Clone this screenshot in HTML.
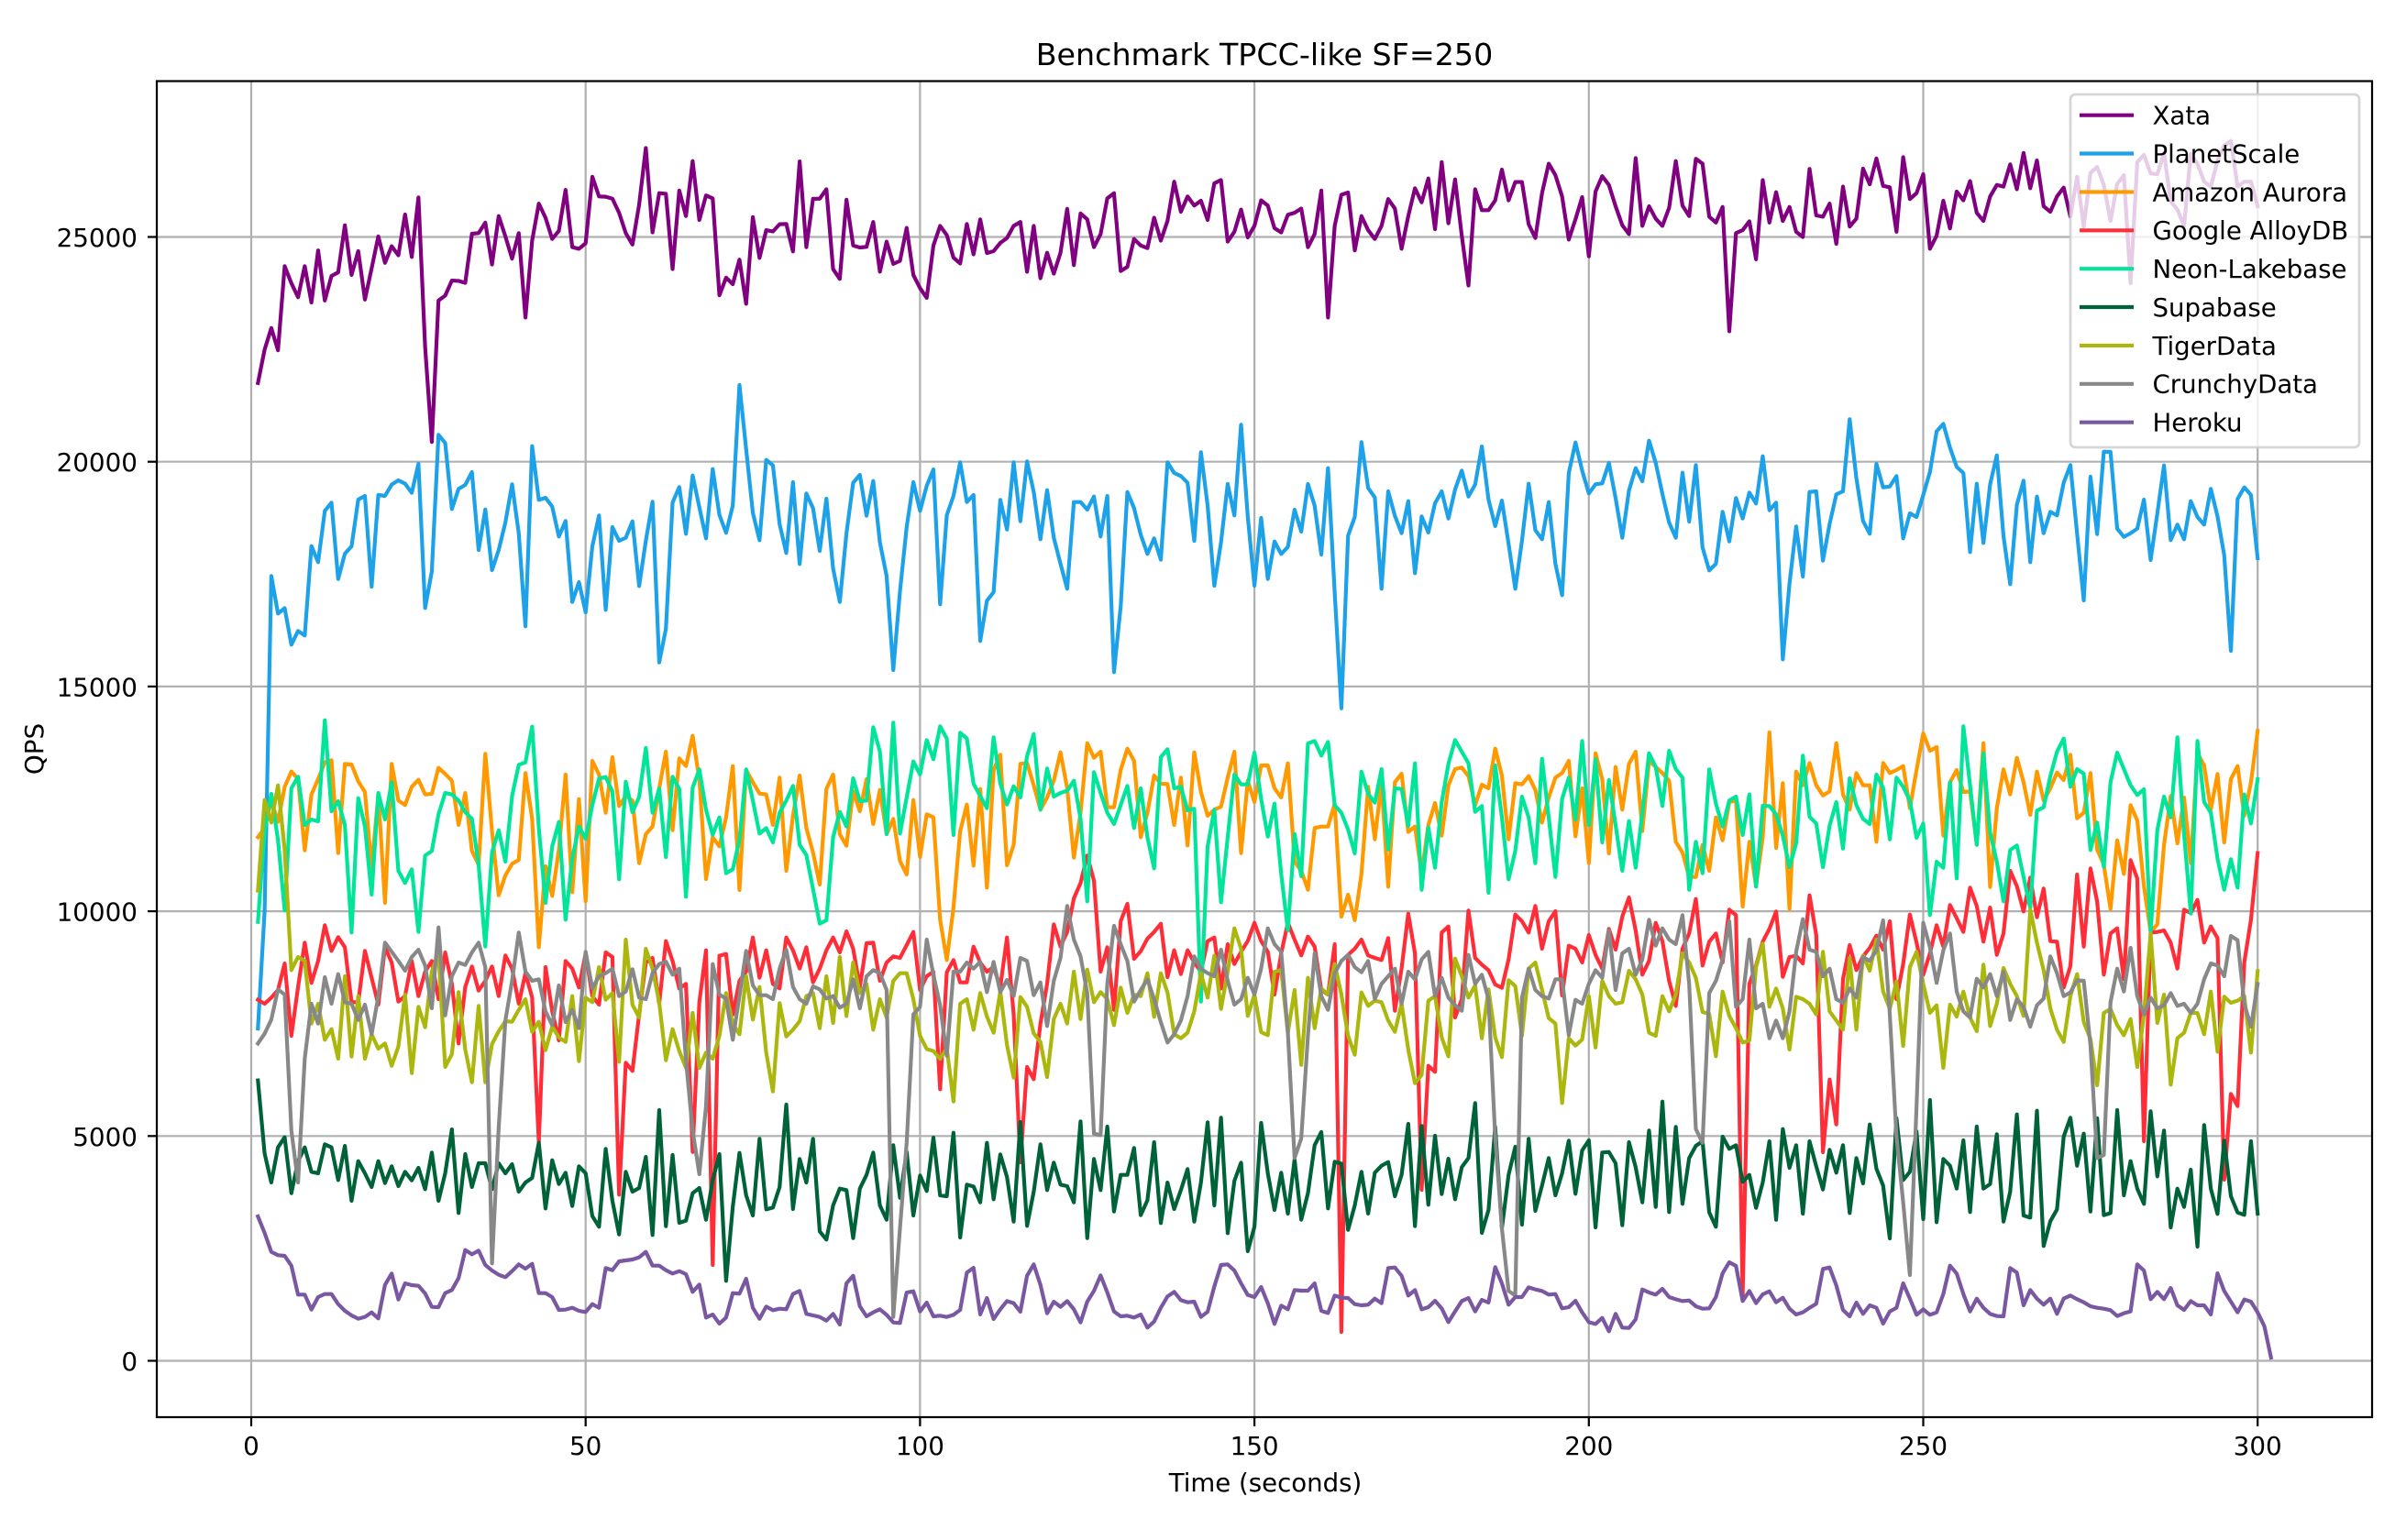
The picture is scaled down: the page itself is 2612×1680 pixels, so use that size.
<!DOCTYPE html>
<html lang="en">
<head>
<meta charset="utf-8">
<title>Benchmark TPCC-like SF=250</title>
<style>
html,body{margin:0;padding:0;background:#fff;width:2612px;height:1680px;overflow:hidden}
svg{display:block}
text{font-family:"DejaVu Sans","Liberation Sans",sans-serif;fill:#000}
.s{fill:none;stroke-width:4.17;stroke-linejoin:round;stroke-linecap:square;vector-effect:non-scaling-stroke}
.g{stroke:#b0b0b0;stroke-width:2.22}
.t{stroke:#000;stroke-width:2.22}
.xl{font-size:27.8px;text-anchor:middle}
.yl{font-size:27.8px;text-anchor:end}
.lg{font-size:27.6px}
</style>
</head>
<body>
<svg width="2612" height="1680" viewBox="0 0 2612 1680" xmlns="http://www.w3.org/2000/svg">
<rect width="2612" height="1680" fill="#fff"/>
<g class="g">
<line x1="274" y1="88.5" x2="274" y2="1546"/><line x1="638.7" y1="88.5" x2="638.7" y2="1546"/><line x1="1003.4" y1="88.5" x2="1003.4" y2="1546"/><line x1="1368.1" y1="88.5" x2="1368.1" y2="1546"/><line x1="1732.8" y1="88.5" x2="1732.8" y2="1546"/><line x1="2097.5" y1="88.5" x2="2097.5" y2="1546"/><line x1="2462.2" y1="88.5" x2="2462.2" y2="1546"/>
<line x1="171" y1="1484.5" x2="2587" y2="1484.5"/><line x1="171" y1="1239.3" x2="2587" y2="1239.3"/><line x1="171" y1="994.1" x2="2587" y2="994.1"/><line x1="171" y1="748.9" x2="2587" y2="748.9"/><line x1="171" y1="503.7" x2="2587" y2="503.7"/><line x1="171" y1="258.5" x2="2587" y2="258.5"/>
</g>
<!-- Xata -->
<polyline class="s" stroke="#800080" transform="translate(274,0) scale(7.294,0.35714)" points="1,1170 2,1068 3,1002 4,1070 5,813 6,865 7,908 8,813 9,924 10,765 11,918 12,843 13,832 14,688 15,840 16,767 17,915 18,820 19,722 20,803 21,752 22,780 23,655 24,785 25,603 26,1060 27,1350 28,918 29,903 30,857 31,858 32,864 33,714 34,712 35,680 36,808 37,660 38,722 39,790 40,712 41,970 42,735 43,622 44,665 45,730 46,705 47,580 48,755 49,760 50,743 51,540 52,600 53,601 54,607 55,650 56,712 57,747 58,625 59,452 60,710 61,590 62,592 63,822 64,582 65,660 66,492 67,672 68,597 69,606 70,902 71,848 72,868 73,793 74,928 75,663 76,788 77,703 78,707 79,685 80,684 81,768 82,493 83,755 84,607 85,607 86,578 87,822 88,852 89,610 90,750 91,756 92,754 93,678 94,830 95,738 96,806 97,797 98,696 99,840 100,880 101,910 102,750 103,690 104,718 105,787 106,805 107,684 108,777 109,670 110,773 111,767 112,742 113,727 114,690 115,678 116,830 117,690 118,850 119,772 120,836 121,772 122,638 123,810 124,652 125,670 126,755 127,715 128,606 129,590 130,828 131,815 132,730 133,750 134,758 135,665 136,735 137,675 138,555 139,647 140,600 141,628 142,613 143,672 144,560 145,550 146,738 147,708 148,640 149,725 150,690 151,612 152,628 153,697 154,710 155,656 156,650 157,637 158,755 159,715 160,582 161,970 162,690 163,595 164,588 165,765 166,660 167,703 168,730 169,690 170,608 171,637 172,760 173,660 174,575 175,618 176,545 177,700 178,495 179,682 180,548 181,720 182,872 183,578 184,642 185,642 186,612 187,518 188,612 189,556 190,556 191,685 192,727 193,590 194,500 195,535 196,600 197,732 198,670 199,602 200,783 201,585 202,538 203,565 204,630 205,688 206,715 207,483 208,690 209,630 210,668 211,690 212,635 213,492 214,628 215,660 216,485 217,500 218,662 219,680 220,632 221,1012 222,712 223,703 224,676 225,792 226,550 227,680 228,587 229,675 230,632 231,708 232,724 233,516 234,658 235,662 236,622 237,745 238,570 239,692 240,668 241,515 242,563 243,484 244,568 245,572 246,708 247,480 248,608 249,590 250,532 251,760 252,720 253,613 254,698 255,585 256,612 257,553 258,650 259,675 260,600 261,565 262,570 263,502 264,578 265,467 266,575 267,490 268,630 269,647 270,600 271,573 272,662 273,540 274,692 275,528 276,510 277,565 278,675 279,562 280,535 281,865 282,495 283,473 284,530 285,532 286,468 287,615 288,640 289,690 290,470 291,500 292,555 293,570 294,490 295,445 296,430 297,570 298,555 299,555 300,630"/>
<!-- PlanetScale -->
<polyline class="s" stroke="#1da1e8" transform="translate(274,440) scale(7.294,0.33333)" points="1,2046 2,1662 3,565 4,688 5,670 6,790 7,745 8,760 9,467 10,520 11,352 12,325 13,575 14,492 15,468 16,315 17,303 18,600 19,300 20,303 21,266 22,252 23,263 24,293 25,198 26,670 27,550 28,103 29,130 30,346 31,280 32,267 33,225 34,480 35,347 36,546 37,480 38,390 39,265 40,425 41,730 42,140 43,316 44,309 45,338 46,436 47,385 48,650 49,585 50,684 51,468 52,367 53,676 54,405 55,450 56,440 57,386 58,598 59,450 60,322 61,848 62,738 63,325 64,274 65,427 66,236 67,340 68,442 69,215 70,365 71,424 72,335 73,-60 74,150 75,358 76,448 77,185 78,203 79,395 80,490 81,258 82,526 83,295 84,343 85,483 86,312 87,540 88,650 89,425 90,260 91,234 92,368 93,254 94,455 95,565 96,873 97,615 98,405 99,258 100,352 101,270 102,216 103,658 104,366 105,303 106,193 107,323 108,300 109,778 110,646 111,618 112,316 113,413 114,193 115,386 116,190 117,290 118,445 119,284 120,440 121,525 122,607 123,323 124,323 125,348 126,305 127,436 128,303 129,880 130,665 131,290 132,343 133,430 134,493 135,442 136,512 137,193 138,228 139,238 140,260 141,450 142,160 143,335 144,597 145,455 146,264 147,367 148,70 149,370 150,597 151,375 152,575 153,452 154,493 155,470 156,348 157,420 158,264 159,335 160,495 161,212 162,620 163,998 164,433 165,372 166,127 167,277 168,308 169,607 170,288 171,368 172,425 173,320 174,556 175,370 176,423 177,327 178,288 179,377 180,282 181,220 182,305 183,266 184,141 185,315 186,402 187,318 188,460 189,607 190,450 191,263 192,415 193,445 194,323 195,525 196,628 197,228 198,128 199,220 200,295 201,265 202,262 203,195 204,310 205,440 206,285 207,212 208,255 209,122 210,195 211,297 212,390 213,440 214,227 215,387 216,202 217,472 218,547 219,525 220,355 221,452 222,310 223,377 224,292 225,328 226,173 227,350 228,325 229,838 230,590 231,403 232,567 233,290 234,288 235,515 236,395 237,298 238,288 239,52 240,245 241,385 242,427 243,198 244,275 245,272 246,238 247,442 248,360 249,372 250,300 251,225 252,92 253,67 254,145 255,208 256,228 257,487 258,263 259,457 260,265 261,170 262,435 263,592 264,332 265,253 266,520 267,305 268,425 269,355 270,367 271,260 272,202 273,425 274,645 275,240 276,428 277,158 278,159 279,410 280,437 281,425 282,410 283,315 284,513 285,360 286,203 287,448 288,397 289,445 290,320 291,372 292,397 293,280 294,370 295,497 296,810 297,313 298,275 299,300 300,507"/>
<!-- Amazon Aurora -->
<polyline class="s" stroke="#ff9900" transform="translate(274,740) scale(7.294,0.33333)" points="1,520 2,490 3,400 4,470 5,355 6,305 7,330 8,563 9,380 10,330 11,275 12,268 13,572 14,280 15,282 16,337 17,372 18,620 19,380 20,735 21,280 22,400 23,415 24,355 25,332 26,380 27,378 28,293 29,313 30,335 31,480 32,375 33,565 34,610 35,247 36,500 37,710 38,645 39,607 40,594 41,310 42,460 43,880 44,615 45,712 46,560 47,315 48,700 49,395 50,730 51,270 52,315 53,440 54,258 55,418 56,385 57,400 58,605 59,510 60,485 61,360 62,240 63,497 64,262 65,287 66,188 67,330 68,657 69,520 70,550 71,455 72,287 73,693 74,300 75,340 76,377 77,380 78,480 79,325 80,630 81,450 82,318 83,490 84,570 85,675 86,362 87,315 88,510 89,548 90,370 91,435 92,330 93,477 94,365 95,510 96,460 97,598 98,642 99,398 100,585 101,445 102,455 103,790 104,922 105,750 106,500 107,413 108,613 109,362 110,685 111,300 112,250 113,612 114,545 115,280 116,277 117,350 118,430 119,390 120,335 121,242 122,360 123,587 124,440 125,212 126,260 127,240 128,422 129,422 130,300 131,230 132,270 133,520 134,440 135,318 136,345 137,346 138,480 139,325 140,547 141,242 142,372 143,450 144,430 145,420 146,325 147,240 148,572 149,335 150,405 151,285 152,285 153,360 154,390 155,278 156,600 157,630 158,692 159,490 160,485 161,485 162,410 163,780 164,708 165,792 166,640 167,355 168,527 169,340 170,682 171,340 172,312 173,503 174,485 175,640 176,480 177,408 178,515 179,350 180,297 181,292 182,320 183,415 184,348 185,360 186,230 187,318 188,527 189,343 190,347 191,320 192,365 193,472 194,390 195,325 196,310 197,270 198,517 199,360 200,605 201,245 202,330 203,573 204,290 205,430 206,280 207,240 208,500 209,270 210,290 211,310 212,335 213,535 214,570 215,650 216,650 217,545 218,630 219,455 220,530 221,405 222,400 223,747 224,535 225,680 226,520 227,177 228,555 229,343 230,755 231,305 232,350 233,277 234,350 235,383 236,370 237,212 238,380 239,430 240,310 241,350 242,350 243,535 244,277 245,310 246,300 247,287 248,425 249,300 250,180 251,237 252,225 253,515 254,340 255,300 256,372 257,370 258,545 259,212 260,683 261,425 262,298 263,380 264,260 265,340 266,447 267,305 268,400 269,360 270,308 271,333 272,250 273,458 274,440 275,310 276,560 277,610 278,755 279,530 280,640 281,415 282,465 283,680 284,830 285,805 286,545 287,385 288,540 289,390 290,605 291,245 292,285 293,430 294,313 295,537 296,330 297,287 298,450 299,340 300,172"/>
<!-- Google AlloyDB -->
<polyline class="s" stroke="#ff2d37" transform="translate(274,740) scale(7.294,0.33333)" points="1,1052 2,1065 3,1045 4,1020 5,933 6,1170 7,1010 8,865 9,997 10,925 11,808 12,892 13,847 14,880 15,1060 16,1060 17,892 18,980 19,1068 20,880 21,930 22,1058 23,1040 24,925 25,1040 26,960 27,925 28,1050 29,897 30,1000 31,1195 32,1010 33,943 34,1022 35,990 36,943 37,1040 38,907 39,950 40,1065 41,965 42,1045 43,1521 44,945 45,1090 46,1185 47,925 48,950 49,1012 50,900 51,1040 52,1068 53,897 54,912 55,1690 56,1258 57,1285 58,1100 59,930 60,915 61,1065 62,860 63,925 64,1015 65,1000 66,1550 67,1060 68,890 69,1920 70,908 71,902 72,1100 73,990 74,960 75,848 76,980 77,890 78,1000 79,1015 80,848 81,890 82,950 83,880 84,995 85,950 86,890 87,848 88,897 89,828 90,885 91,1010 92,867 93,865 94,990 95,930 96,910 97,915 98,873 99,830 100,1020 101,975 102,960 103,1345 104,962 105,922 106,995 107,995 108,878 109,930 110,960 111,945 112,1010 113,848 114,1100 115,1584 116,1272 117,1312 118,1130 119,1000 120,805 121,878 122,830 123,720 124,670 125,580 126,662 127,960 128,880 129,1085 130,795 131,738 132,918 133,893 134,852 135,830 136,803 137,978 138,890 139,968 140,890 141,930 142,960 143,860 144,848 145,1015 146,870 147,935 148,895 149,860 150,800 151,860 152,895 153,1035 154,900 155,800 156,855 157,907 158,845 159,878 160,1020 161,1035 162,870 163,2139 164,905 165,885 166,855 167,907 168,915 169,922 170,850 171,1088 172,950 173,770 174,900 175,1674 176,1268 177,1288 178,832 179,812 180,1110 181,1050 182,760 183,915 184,937 185,955 186,1002 187,1013 188,920 189,773 190,795 191,832 192,745 193,885 194,795 195,762 196,1038 197,875 198,885 199,930 200,840 201,905 202,950 203,820 204,888 205,780 206,717 207,825 208,970 209,925 210,800 211,860 212,990 213,1072 214,885 215,835 216,722 217,940 218,862 219,835 220,930 221,757 222,775 223,2019 224,1000 225,940 226,862 227,820 228,763 229,977 230,912 231,908 232,933 233,710 234,840 235,1551 236,1313 237,1460 238,985 239,873 240,955 241,910 242,882 243,842 244,888 245,795 246,1050 247,935 248,773 249,865 250,970 251,900 252,808 253,878 254,742 255,785 256,830 257,685 258,745 259,862 260,750 261,905 262,835 263,630 264,680 265,763 266,652 267,782 268,688 269,860 270,862 271,1012 272,942 273,642 274,878 275,622 276,730 277,970 278,835 279,818 280,985 281,595 282,655 283,1515 284,832 285,830 286,825 287,865 288,950 289,757 290,768 291,725 292,865 293,812 294,850 295,1641 296,1360 297,1400 298,930 299,790 300,572"/>
<!-- Neon-Lakebase -->
<polyline class="s" stroke="#00e599" transform="translate(274,740) scale(7.294,0.33333)" points="1,797 2,500 3,378 4,530 5,760 6,360 7,322 8,480 9,462 10,468 11,137 12,435 13,402 14,480 15,832 16,392 17,485 18,708 19,375 20,462 21,340 22,630 23,670 24,625 25,830 26,580 27,565 28,445 29,375 30,380 31,400 32,438 33,460 34,610 35,878 36,570 37,497 38,600 39,385 40,283 41,275 42,158 43,490 44,735 45,550 46,470 47,790 48,590 49,485 50,525 51,415 52,328 53,323 54,370 55,658 56,338 57,438 58,388 59,228 60,440 61,360 62,585 63,322 64,362 65,715 66,358 67,298 68,430 69,512 70,455 71,638 72,625 73,530 74,298 75,400 76,508 77,490 78,537 79,440 80,400 81,352 82,545 83,578 84,690 85,803 86,792 87,520 88,437 89,485 90,327 91,402 92,400 93,160 94,240 95,510 96,145 97,508 98,390 99,272 100,315 101,202 102,265 103,157 104,197 105,513 106,178 107,197 108,345 109,385 110,425 111,193 112,345 113,413 114,353 115,390 116,255 117,182 118,430 119,295 120,387 121,375 122,368 123,335 124,460 125,730 126,307 127,375 128,440 129,477 130,415 131,352 132,490 133,360 134,520 135,622 136,258 137,232 138,360 139,355 140,432 141,427 142,1058 143,550 144,430 145,733 146,520 147,315 148,347 149,347 150,243 151,395 152,518 153,410 154,640 155,825 156,510 157,648 158,213 159,205 160,253 161,208 162,415 163,440 164,495 165,573 166,305 167,378 168,407 169,297 170,560 171,360 172,362 173,483 174,278 175,692 176,488 177,620 178,405 179,280 180,202 181,240 182,278 183,437 184,418 185,702 186,285 187,455 188,658 189,565 190,387 191,455 192,605 193,263 194,455 195,650 196,395 197,325 198,463 199,205 200,480 201,265 202,537 203,333 204,480 205,630 206,467 207,620 208,440 209,245 210,290 211,418 212,237 213,297 214,325 215,692 216,535 217,638 218,298 219,410 220,485 221,400 222,387 223,513 224,380 225,682 226,417 227,418 228,445 229,515 230,618 231,540 232,253 233,453 234,475 235,618 236,482 237,405 238,557 239,327 240,415 241,460 242,477 243,315 244,358 245,527 246,325 247,355 248,400 249,522 250,475 251,775 252,600 253,620 254,340 255,655 256,157 257,350 258,545 259,245 260,505 261,600 262,730 263,562 264,547 265,650 266,752 267,433 268,422 269,320 270,240 271,197 272,355 273,297 274,312 275,562 276,472 277,617 278,340 279,243 280,297 281,350 282,382 283,363 284,830 285,497 286,387 287,455 288,193 289,510 290,770 291,205 292,405 293,440 294,590 295,692 296,592 297,685 298,380 299,475 300,330"/>
<!-- Supabase -->
<polyline class="s" stroke="#006239" transform="translate(274,1200) scale(7.294,0.33333)" points="1,-64 2,175 3,270 4,155 5,122 6,305 7,200 8,155 9,235 10,240 11,145 12,155 13,262 14,150 15,330 16,200 17,240 18,285 19,200 20,272 21,217 22,282 23,235 24,263 25,222 26,292 27,172 28,330 29,240 30,96 31,370 32,177 33,285 34,207 35,207 36,292 37,207 38,240 39,210 40,300 41,270 42,255 43,140 44,355 45,197 46,275 47,238 48,347 49,217 50,240 51,380 52,415 53,160 54,330 55,440 56,235 57,300 58,288 59,186 60,442 61,33 62,413 63,180 64,402 65,395 66,305 67,288 68,392 69,262 70,177 71,592 72,350 73,173 74,312 75,378 76,127 77,358 78,352 79,285 80,15 81,357 82,193 83,270 84,127 85,430 86,457 87,345 88,290 89,295 90,452 91,290 92,245 93,172 94,345 95,392 96,148 97,320 98,170 99,378 100,247 101,298 102,123 103,312 104,315 105,107 106,450 107,277 108,283 109,335 110,140 111,325 112,178 113,252 114,398 115,72 116,412 117,300 118,145 119,295 120,205 121,277 122,282 123,335 124,70 125,452 126,193 127,295 128,87 129,365 130,245 131,245 132,157 133,377 134,328 135,138 136,403 137,270 138,357 139,295 140,226 141,398 142,270 143,73 144,345 145,58 146,436 147,265 148,205 149,495 150,415 151,75 152,240 153,360 154,238 155,372 156,195 157,392 158,305 159,148 160,105 161,355 162,202 163,208 164,425 165,345 166,235 167,372 168,238 169,215 170,203 171,315 172,245 173,78 174,413 175,85 176,343 177,117 178,308 179,192 180,325 181,220 182,190 183,10 184,435 185,360 186,88 187,420 188,245 189,153 190,408 191,127 192,363 193,280 194,190 195,312 196,240 197,133 198,307 199,165 200,132 201,417 202,172 203,170 204,207 205,410 206,138 207,220 208,335 209,100 210,350 211,5 212,367 213,88 214,340 215,190 216,150 217,135 218,368 219,415 220,120 221,160 222,148 223,268 224,245 225,353 226,270 227,135 228,392 229,95 230,222 231,148 232,372 233,135 234,217 235,293 236,163 237,238 238,148 239,370 240,190 241,273 242,80 243,225 244,280 245,453 246,60 247,262 248,235 249,103 250,390 251,0 252,400 253,193 254,215 255,290 256,132 257,367 258,87 259,290 260,275 261,112 262,398 263,300 264,47 265,378 266,385 267,35 268,478 269,397 270,358 271,120 272,58 273,215 274,110 275,365 276,60 277,377 278,370 279,33 280,312 281,200 282,290 283,340 284,37 285,250 286,100 287,417 288,290 289,350 290,228 291,480 292,82 293,290 294,373 295,133 296,315 297,368 298,376 299,135 300,372"/>
<!-- TigerData -->
<polyline class="s" stroke="#acb70e" transform="translate(274,740) scale(7.294,0.33333)" points="1,695 2,398 3,472 4,350 5,560 6,955 7,912 8,925 9,1130 10,1065 11,1183 12,1148 13,1245 14,975 15,1238 16,1040 17,1245 18,1165 19,1212 20,1195 21,1268 22,1205 23,1035 24,1292 25,1075 26,1142 27,960 28,900 29,1272 30,1230 31,1027 32,1215 33,1322 34,1072 35,1322 36,1197 37,1155 38,1122 39,1124 40,1085 41,1050 42,1157 43,1124 44,1217 45,1140 46,1175 47,1190 48,1040 49,1253 50,1045 51,1060 52,945 53,1052 54,1030 55,1255 56,855 57,1068 58,1110 59,885 60,950 61,1060 62,1250 63,1148 64,1220 65,1275 66,1095 67,1275 68,1225 69,1245 70,1170 71,1030 72,1130 73,1165 74,975 75,1117 76,1010 77,1225 78,1352 79,1063 80,1172 81,1150 82,1122 83,1040 84,1030 85,1145 86,975 87,1128 88,912 89,1105 90,930 91,1030 92,1000 93,1150 94,1050 95,1110 96,990 97,965 98,965 99,1050 100,1170 101,1213 102,1220 103,1245 104,1210 105,1385 106,1065 107,1050 108,1150 109,1030 110,1107 111,1160 112,1025 113,1200 114,1307 115,1043 116,1075 117,1162 118,1190 119,1305 120,1115 121,1065 122,1130 123,960 124,1115 125,953 126,1060 127,1027 128,1050 129,1135 130,1012 131,1095 132,1035 133,1040 134,965 135,1108 136,965 137,1028 138,1165 139,1178 140,1160 141,1090 142,965 143,1045 144,908 145,1082 146,960 147,818 148,885 149,1105 150,1035 151,1158 152,1168 153,960 154,955 155,1160 156,1020 157,1265 158,980 159,1145 160,1015 161,1035 162,935 163,1035 164,1170 165,1232 166,1028 167,1072 168,1055 169,1060 170,1120 171,1157 172,1065 173,1215 174,1325 175,1298 176,1055 177,1040 178,1175 179,1237 180,917 181,975 182,1045 183,1005 184,1178 185,1018 186,1175 187,1240 188,988 189,1007 190,1170 191,950 192,930 193,1020 194,1112 195,1130 196,1390 197,1178 198,1202 199,1182 200,1040 201,1208 202,990 203,1040 204,1065 205,1060 206,957 207,985 208,1035 209,1160 210,1170 211,1040 212,1090 213,1035 214,900 215,930 216,980 217,1092 218,1098 219,1237 220,1025 221,1105 222,1145 223,1192 224,1185 225,945 226,868 227,1075 228,1015 229,1080 230,1215 231,1042 232,1050 233,1065 234,1100 235,895 236,1090 237,1120 238,1150 239,915 240,1150 241,907 242,957 243,855 244,1025 245,1082 246,992 247,1203 248,945 249,895 250,1000 251,1095 252,1070 253,1275 254,1068 255,1107 256,1025 257,1110 258,1155 259,937 260,1138 261,1065 262,948 263,1000 264,1040 265,1105 266,757 267,865 268,955 269,1080 270,1150 271,1190 272,1040 273,968 274,1125 275,1180 276,1332 277,1095 278,1082 279,1135 280,1168 281,1115 282,1272 283,1100 284,835 285,1128 286,1035 287,1330 288,1178 289,1160 290,1095 291,1095 292,1165 293,1025 294,1222 295,1042 296,1062 297,1055 298,1040 299,1225 300,958"/>
<!-- CrunchyData -->
<polyline class="s" stroke="#888888" transform="translate(274,740) scale(7.294,0.33333)" points="1,1195 2,1163 3,1117 4,1018 5,1035 6,1480 7,1650 8,1245 9,1065 10,1130 11,978 12,1065 13,968 14,1060 15,1065 16,1118 17,1068 18,1165 19,1040 20,865 21,895 22,925 23,957 24,912 25,888 26,940 27,1080 28,815 29,1103 30,975 31,930 32,938 33,897 34,865 35,945 36,1915 37,1470 38,1120 39,990 40,832 41,960 42,990 43,985 44,1090 45,1135 46,1005 47,1125 48,1085 49,1145 50,895 51,1015 52,975 53,965 54,950 55,1040 56,1025 57,952 58,1045 59,1050 60,965 61,935 62,927 63,970 64,950 65,1250 66,1480 67,1623 68,1400 69,935 70,1035 71,1048 72,1183 73,1040 74,892 75,1005 76,1037 77,1037 78,1050 79,950 80,888 81,1010 82,1050 83,1065 84,1008 85,1018 86,1048 87,1040 88,1078 89,1065 90,985 91,1080 92,975 93,955 94,965 95,1020 96,2090 97,1800 98,1520 99,1100 100,1075 101,855 102,970 103,1070 104,1235 105,960 106,960 107,930 108,950 109,928 110,1027 111,928 112,1027 113,987 114,1040 115,915 116,925 117,1037 118,995 119,1138 120,990 121,915 122,745 123,855 124,910 125,1030 126,1490 127,1495 128,1000 129,810 130,870 131,925 132,1058 133,1020 134,985 135,1050 136,1125 137,1192 138,1165 139,1120 140,1040 141,910 142,950 143,965 144,975 145,888 146,990 147,1068 148,1050 149,980 150,1035 151,950 152,818 153,870 154,895 155,1160 156,1570 157,1506 158,1170 159,900 160,1040 161,1085 162,965 163,925 164,905 165,945 166,962 167,925 168,1050 169,1000 170,975 171,950 172,1065 173,960 174,985 175,920 176,895 177,1040 178,980 179,1045 180,1070 181,1088 182,905 183,1000 184,970 185,1050 186,1500 187,1800 188,2005 189,2020 190,1045 191,950 192,1020 193,1040 194,1048 195,985 196,985 197,1168 198,1052 199,1065 200,1000 201,955 202,980 203,825 204,1020 205,900 206,885 207,970 208,920 209,790 210,875 211,818 212,855 213,870 214,775 215,1000 216,1475 217,1520 218,1030 219,990 220,920 221,795 222,1075 223,1050 224,855 225,1080 226,1065 227,1178 228,1120 229,1178 230,1090 231,895 232,788 233,888 234,895 235,975 236,950 237,1050 238,1062 239,1015 240,1045 241,912 242,925 243,890 244,792 245,1100 246,1500 247,1715 248,1953 249,1400 250,800 251,880 252,997 253,890 254,835 255,1025 256,1090 257,1110 258,983 259,1012 260,968 261,1040 262,960 263,1118 264,1050 265,1075 266,1140 267,1070 268,1048 269,910 270,965 271,1040 272,1028 273,988 274,990 275,1200 276,1570 277,1560 278,1060 279,950 280,1025 281,882 282,1040 283,1100 284,1045 285,1080 286,1070 287,1030 288,1072 289,1065 290,1095 291,1065 292,985 293,933 294,940 295,975 296,843 297,857 298,1065 299,1140 300,1000"/>
<!-- Heroku -->
<polyline class="s" stroke="#7a58a1" transform="translate(274,1200) scale(7.294,0.33333)" points="1,381 2,435 3,497 4,508 5,510 6,542 7,637 8,637 9,686 10,645 11,635 12,635 13,668 14,690 15,705 16,716 17,710 18,695 19,715 20,605 21,568 22,653 23,600 24,606 25,608 26,633 27,677 28,678 29,632 30,622 31,583 32,491 33,505 34,493 35,540 36,558 37,572 38,580 39,560 40,538 41,552 42,536 43,632 44,632 45,645 46,687 47,686 48,680 49,690 50,694 51,668 52,680 53,550 54,557 55,528 56,525 57,522 58,515 59,497 60,542 61,542 62,557 63,568 64,560 65,570 66,628 67,604 68,712 69,702 70,732 71,712 72,632 73,634 74,585 75,680 76,716 77,676 78,688 79,683 80,685 81,635 82,625 83,700 84,705 85,710 86,722 87,700 88,735 89,600 90,575 91,675 92,708 93,695 94,685 95,703 96,728 97,730 98,630 99,626 100,692 101,663 102,708 103,706 104,710 105,703 106,687 107,565 108,549 109,702 110,648 111,717 112,685 113,658 114,665 115,693 116,575 117,538 118,605 119,698 120,660 121,677 122,658 123,685 124,728 125,660 126,625 127,574 128,630 129,692 130,708 131,706 132,712 133,702 134,745 135,725 136,680 137,643 138,628 139,655 140,662 141,660 142,710 143,693 144,610 145,540 146,538 147,558 148,600 149,638 150,645 151,612 152,665 153,733 154,673 155,685 156,622 157,624 158,624 159,600 160,690 161,697 162,640 163,647 164,648 165,668 166,672 167,670 168,650 169,665 170,550 171,548 172,575 173,640 174,622 175,685 176,678 177,657 178,682 179,727 180,692 181,658 182,648 183,692 184,654 185,663 186,547 187,600 188,670 189,645 190,645 191,613 192,620 193,625 194,637 195,635 196,682 197,678 198,657 199,695 200,727 201,733 202,713 203,757 204,700 205,745 206,746 207,718 208,620 209,630 210,637 211,618 212,645 213,652 214,658 215,656 216,675 217,683 218,682 219,645 220,567 221,531 222,543 223,658 224,625 225,665 226,636 227,626 228,662 229,647 230,683 231,702 232,695 233,680 234,667 235,553 236,548 237,607 238,687 239,708 240,663 241,700 242,672 243,680 244,732 245,692 246,680 247,600 248,650 249,703 250,685 251,703 252,695 253,635 254,542 255,568 256,635 257,692 258,650 259,680 260,700 261,707 262,708 263,550 264,565 265,672 266,622 267,650 268,670 269,650 270,700 271,650 272,640 273,652 274,662 275,675 276,680 277,683 278,688 279,707 280,698 281,692 282,538 283,558 284,652 285,628 286,652 287,615 288,672 289,687 290,658 291,672 292,672 293,702 294,567 295,625 296,660 297,695 298,653 299,660 300,695 301,740 302,843"/>
<!-- Axes frame -->
<rect x="171" y="88.5" width="2416" height="1457.5" fill="none" stroke="#000" stroke-width="2.22"/>
<!-- Ticks -->
<g class="t">
<line x1="274" y1="1546" x2="274" y2="1556"/><line x1="638.7" y1="1546" x2="638.7" y2="1556"/><line x1="1003.4" y1="1546" x2="1003.4" y2="1556"/><line x1="1368.1" y1="1546" x2="1368.1" y2="1556"/><line x1="1732.8" y1="1546" x2="1732.8" y2="1556"/><line x1="2097.5" y1="1546" x2="2097.5" y2="1556"/><line x1="2462.2" y1="1546" x2="2462.2" y2="1556"/>
<line x1="161" y1="1484.5" x2="171" y2="1484.5"/><line x1="161" y1="1239.3" x2="171" y2="1239.3"/><line x1="161" y1="994.1" x2="171" y2="994.1"/><line x1="161" y1="748.9" x2="171" y2="748.9"/><line x1="161" y1="503.7" x2="171" y2="503.7"/><line x1="161" y1="258.5" x2="171" y2="258.5"/>
</g>
<text class="xl" x="274" y="1587">0</text>
<text class="xl" x="638.7" y="1587">50</text>
<text class="xl" x="1003.4" y="1587">100</text>
<text class="xl" x="1368.1" y="1587">150</text>
<text class="xl" x="1732.8" y="1587">200</text>
<text class="xl" x="2097.5" y="1587">250</text>
<text class="xl" x="2462.2" y="1587">300</text>
<text class="yl" x="150" y="1495">0</text>
<text class="yl" x="150" y="1249.8">5000</text>
<text class="yl" x="150" y="1004.6">10000</text>
<text class="yl" x="150" y="759.4">15000</text>
<text class="yl" x="150" y="514.2">20000</text>
<text class="yl" x="150" y="269">25000</text>
<text x="1380" y="1627" font-size="27.6" text-anchor="middle">Time (seconds)</text>
<text x="0" y="0" font-size="27.8" text-anchor="middle" transform="translate(47,817) rotate(-90)">QPS</text>
<text x="1379" y="71" font-size="33.3" text-anchor="middle">Benchmark TPCC-like SF=250</text>
<!-- Legend -->
<rect x="2258" y="103" width="315" height="385" rx="5.5" ry="5.5" fill="#fff" fill-opacity="0.8" stroke="#cccccc" stroke-opacity="0.8" stroke-width="2.78"/>
<g stroke-width="4.17">
<line x1="2268" y1="125.7" x2="2327" y2="125.7" stroke="#800080"/>
<line x1="2268" y1="167.5" x2="2327" y2="167.5" stroke="#1da1e8"/>
<line x1="2268" y1="209.4" x2="2327" y2="209.4" stroke="#ff9900"/>
<line x1="2268" y1="251.3" x2="2327" y2="251.3" stroke="#ff2d37"/>
<line x1="2268" y1="293.2" x2="2327" y2="293.2" stroke="#00e599"/>
<line x1="2268" y1="335" x2="2327" y2="335" stroke="#006239"/>
<line x1="2268" y1="376.9" x2="2327" y2="376.9" stroke="#acb70e"/>
<line x1="2268" y1="418.8" x2="2327" y2="418.8" stroke="#888888"/>
<line x1="2268" y1="460.7" x2="2327" y2="460.7" stroke="#7a58a1"/>
</g>
<text class="lg" x="2347.5" y="135.6">Xata</text>
<text class="lg" x="2347.5" y="177.4">PlanetScale</text>
<text class="lg" x="2347.5" y="219.3">Amazon Aurora</text>
<text class="lg" x="2347.5" y="261.2">Google AlloyDB</text>
<text class="lg" x="2347.5" y="303">Neon-Lakebase</text>
<text class="lg" x="2347.5" y="344.9">Supabase</text>
<text class="lg" x="2347.5" y="386.8">TigerData</text>
<text class="lg" x="2347.5" y="428.6">CrunchyData</text>
<text class="lg" x="2347.5" y="470.5">Heroku</text>
</svg>
</body>
</html>
